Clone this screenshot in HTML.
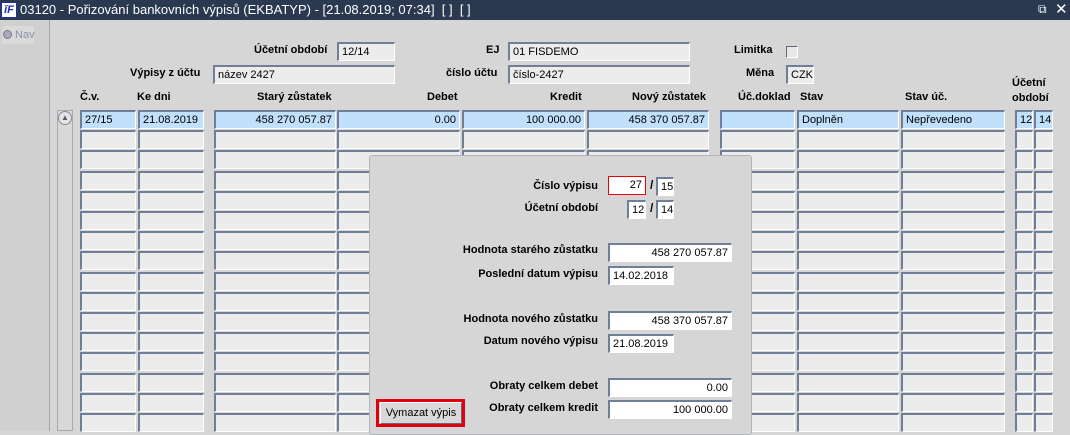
<!DOCTYPE html>
<html><head><meta charset="utf-8"><style>
*{margin:0;padding:0;box-sizing:border-box}
body{width:1070px;height:431px;overflow:hidden;background:#d6d6d6;font-family:"Liberation Sans",sans-serif;font-size:11px;position:relative;color:#000}
.a{position:absolute}
.f{position:absolute;height:19px;background:#ececec;border:1px solid #fff;border-top:2px solid #6f7f98;border-left:2px solid #6f7f98;padding:1px 3px;line-height:14px;white-space:nowrap;overflow:hidden}
.s{background:#c0e0fb}
.w{background:#fff}
.r{text-align:right}
.l{position:absolute;font-weight:bold;white-space:nowrap}
.lr{text-align:right}
</style></head><body>
<div class="a" style="left:0;top:0;width:1070px;height:20px;background:#2a3850;color:#fff;font-size:13px;line-height:20px;padding-left:20px">03120 - Pořizování bankovních výpisů (EKBATYP) - [21.08.2019; 07:34]&nbsp; [ ]&nbsp; [ ]</div>
<div class="a" style="left:1px;top:2px;width:16px;height:16px;background:#fff;border:1px solid #2030a0;color:#1a2fb0;font-weight:bold;font-style:italic;font-size:11px;line-height:14px;text-align:center">ĭF</div>
<div class="a" style="left:1038px;top:2px;color:#fff;font-size:12px">⧉</div>
<div class="a" style="left:1055px;top:0px;color:#fff;font-size:15px">✕</div>
<div class="a" style="left:0;top:20px;width:50px;height:411px;background:#d0d0d0;border-right:1px solid #9aa"></div>
<div class="a" style="left:2px;top:26px;width:32px;height:18px;background:#dadada"></div>
<div class="a" style="left:3px;top:29px;color:#8a94a6;font-size:11px"><span style="display:inline-block;width:9px;height:9px;border-radius:50%;background:#aab;border:1px solid #778;vertical-align:-1px"></span> Nav</div>

<div class="l" style="left:254px;top:44px">Účetní období</div>
<div class="f" style="left:337px;top:42px;width:58px">12/14</div>
<div class="l" style="left:486px;top:44px">EJ</div>
<div class="f" style="left:508px;top:42px;width:182px">01 FISDEMO</div>
<div class="l" style="left:734px;top:44px">Limitka</div>
<div class="a" style="left:786px;top:46px;width:12px;height:12px;background:#e8e8e8;border:1px solid #fff;border-top-color:#667;border-left-color:#667"></div>
<div class="l" style="left:130px;top:67px">Výpisy z účtu</div>
<div class="f" style="left:213px;top:65px;width:182px">název 2427</div>
<div class="l" style="left:446px;top:67px">číslo účtu</div>
<div class="f" style="left:508px;top:65px;width:182px">číslo-2427</div>
<div class="l" style="left:746px;top:67px">Měna</div>
<div class="f" style="left:786px;top:65px;width:28px">CZK</div>

<div class="l" style="left:80px;top:91px">Č.v.</div>
<div class="l" style="left:137px;top:91px">Ke dni</div>
<div class="l" style="left:257px;top:91px">Starý zůstatek</div>
<div class="l" style="left:427px;top:91px">Debet</div>
<div class="l" style="left:550px;top:91px">Kredit</div>
<div class="l" style="left:632px;top:91px">Nový zůstatek</div>
<div class="l" style="left:738px;top:91px">Úč.doklad</div>
<div class="l" style="left:800px;top:91px">Stav</div>
<div class="l" style="left:905px;top:91px">Stav úč.</div>
<div class="l" style="left:1012px;top:76px;line-height:15px">Účetní<br>období</div>

<div class="a" style="left:57px;top:110px;width:16px;height:321px;border:1px solid #aaa;background:#d8d8d8"></div>
<div class="a" style="left:58px;top:111px;width:14px;height:14px;border-radius:50%;background:#e4e4e4;border:1px solid #889;font-size:8px;text-align:center;line-height:12px;color:#556">▲</div>
<div id="g"></div>

<div class="a" style="left:369px;top:155px;width:383px;height:280px;background:#d6d6d6;border:1px solid #b0b4bc;border-radius:3px"></div>
<div class="l lr" style="right:472px;top:180px">Číslo výpisu</div>
<div class="f w r" style="left:608px;top:176px;width:38px;border:1px solid #e00">27</div>
<div class="a" style="left:650px;top:178px;font-weight:bold;font-size:12px">/</div>
<div class="f w" style="left:656px;top:177px;width:18px">15</div>
<div class="l lr" style="right:472px;top:202px">Účetní období</div>
<div class="f w" style="left:627px;top:200px;width:19px">12</div>
<div class="a" style="left:650px;top:201px;font-weight:bold;font-size:12px">/</div>
<div class="f w" style="left:656px;top:200px;width:18px">14</div>
<div class="l lr" style="right:472px;top:244px">Hodnota starého zůstatku</div>
<div class="f w r" style="left:608px;top:243px;width:124px">458 270 057.87</div>
<div class="l lr" style="right:472px;top:268px">Poslední datum výpisu</div>
<div class="f w" style="left:608px;top:266px;width:66px">14.02.2018</div>
<div class="l lr" style="right:472px;top:313px">Hodnota nového zůstatku</div>
<div class="f w r" style="left:608px;top:311px;width:124px">458 370 057.87</div>
<div class="l lr" style="right:472px;top:335px">Datum nového výpisu</div>
<div class="f w" style="left:608px;top:334px;width:66px">21.08.2019</div>
<div class="l lr" style="right:472px;top:380px">Obraty celkem debet</div>
<div class="f w r" style="left:608px;top:378px;width:124px">0.00</div>
<div class="l lr" style="right:472px;top:402px">Obraty celkem kredit</div>
<div class="f w r" style="left:608px;top:400px;width:124px">100 000.00</div>
<div class="a" style="left:376px;top:399px;width:89px;height:28px;border:3px solid #e00010"></div>
<div class="a" style="left:380px;top:402px;width:82px;height:22px;background:#d8d8d8;border:1px solid #fff;border-bottom-color:#667;border-right-color:#667;text-align:center;line-height:20px;font-size:11px">Vymazat výpis</div>
<script>
var cols=[[80,56],[138,66],[214,122],[337,123],[462,123],[587,122],[720,75],[797,102],[901,104],[1015,18],[1034,19]];
var v=["27/15","21.08.2019","458 270 057.87","0.00","100 000.00","458 370 057.87","","Doplněn","Nepřevedeno","12","14"];
var rt=[0,0,1,1,1,1,0,0,0,0,0];
var h="";
for(var r=0;r<16;r++){var y=110+Math.round(r*20.2);
for(var c=0;c<cols.length;c++){h+='<div class="f'+(r==0?' s':'')+(rt[c]?' r':'')+'" style="left:'+cols[c][0]+'px;top:'+y+'px;width:'+cols[c][1]+'px">'+(r==0?v[c]:'')+'</div>';}}
document.getElementById('g').innerHTML=h;
</script>
</body></html>
